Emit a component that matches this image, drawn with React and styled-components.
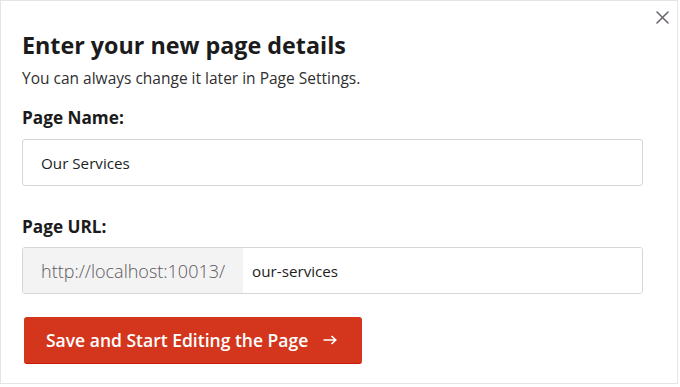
import React from "react"
import styled, { createGlobalStyle } from "styled-components"

const GlobalStyle = createGlobalStyle`
  html, body {
    margin: 0;
    padding: 0;
    background: #fff;
  }
  body {
    font-family: "Open Sans", "Liberation Sans", sans-serif;
    -webkit-font-smoothing: antialiased;
  }
`

const CloseIcon = () => (
  <svg width="13" height="13" viewBox="0 0 13 13" fill="none">
    <path d="M1 1L12 12M12 1L1 12" stroke="#6e6670" strokeWidth="1.6" strokeLinecap="round" />
  </svg>
)

const ArrowIcon = () => (
  <svg width="14" height="10" viewBox="0 0 14 10" fill="none">
    <path d="M0.5 5H12.5M8.5 1L12.8 5L8.5 9" stroke="#fff" strokeWidth="1.7" strokeLinejoin="round" />
  </svg>
)

const App = () => {
  return (
    <>
      <GlobalStyle />
      <Modal>
        <CloseButton aria-label="Close">
          <CloseIcon />
        </CloseButton>
        <Title>Enter your new page details</Title>
        <Subtitle>You can always change it later in Page Settings.</Subtitle>

        <Label>Page Name:</Label>
        <TextInput defaultValue="Our Services" />

        <Label spaced>Page URL:</Label>
        <UrlField>
          <UrlPrefix>http://localhost:10013/</UrlPrefix>
          <UrlInput defaultValue="our-services" />
        </UrlField>

        <SaveButton>
          Save and Start Editing the Page
          <Arrow>
            <ArrowIcon />
          </Arrow>
        </SaveButton>
      </Modal>
    </>
  )
}

const Modal = styled.div`
  position: relative;
  box-sizing: border-box;
  width: 678px;
  height: 384px;
  border: 1px solid #e4e4e4;
  padding: 29px 21px 0;
  display: flex;
  flex-direction: column;
  align-items: flex-start;
  background: #fff;
`

const CloseButton = styled.button`
  position: absolute;
  top: 9px;
  right: 7px;
  width: 15px;
  height: 15px;
  padding: 1px;
  border: none;
  background: none;
  cursor: pointer;
  display: flex;
`

const Title = styled.h2`
  margin: 0;
  font-size: 23.3px;
  line-height: 30px;
  font-weight: 700;
  color: #1b1b1b;
`

const Subtitle = styled.p`
  margin: 8px 0 0;
  font-size: 15.5px;
  line-height: 20px;
  color: #2f2f2f;
`

const Label = styled.label`
  display: block;
  margin-top: ${(props) => (props.spaced ? "30px" : "19px")};
  font-size: 17.2px;
  line-height: 22px;
  font-weight: 700;
  color: #1b1b1b;
`

const TextInput = styled.input`
  box-sizing: border-box;
  width: 621px;
  height: 47px;
  margin-top: 10px;
  padding: 0 18px;
  border: 1px solid #d6d6d6;
  border-radius: 3px;
  font-family: inherit;
  font-size: 15.2px;
  color: #1e1e1e;
  background: #fff;
  outline: none;
`

const UrlField = styled.div`
  box-sizing: border-box;
  width: 621px;
  height: 47px;
  margin-top: 9px;
  display: flex;
  border: 1px solid #d6d6d6;
  border-radius: 3px;
  overflow: hidden;
`

const UrlPrefix = styled.div`
  display: flex;
  align-items: center;
  padding: 0 18px;
  background: #f3f3f3;
  font-size: 18px;
  font-weight: 300;
  color: #5d5760;
  white-space: nowrap;
`

const UrlInput = styled.input`
  flex: 1;
  min-width: 0;
  border: none;
  padding: 0 9px;
  font-family: inherit;
  font-size: 15.2px;
  color: #1e1e1e;
  outline: none;
`

const SaveButton = styled.button`
  box-sizing: border-box;
  margin: 23px 0 0 2px;
  height: 47px;
  width: 338px;
  padding: 0 0 0 22px;
  display: flex;
  align-items: center;
  border: none;
  border-bottom: 1px solid #c41a0c;
  border-radius: 3px;
  background: #d3361c;
  color: #fff;
  font-family: inherit;
  font-size: 17.5px;
  font-weight: 600;
  cursor: pointer;
`

const Arrow = styled.span`
  display: flex;
  margin-left: 15px;
`

export default App
